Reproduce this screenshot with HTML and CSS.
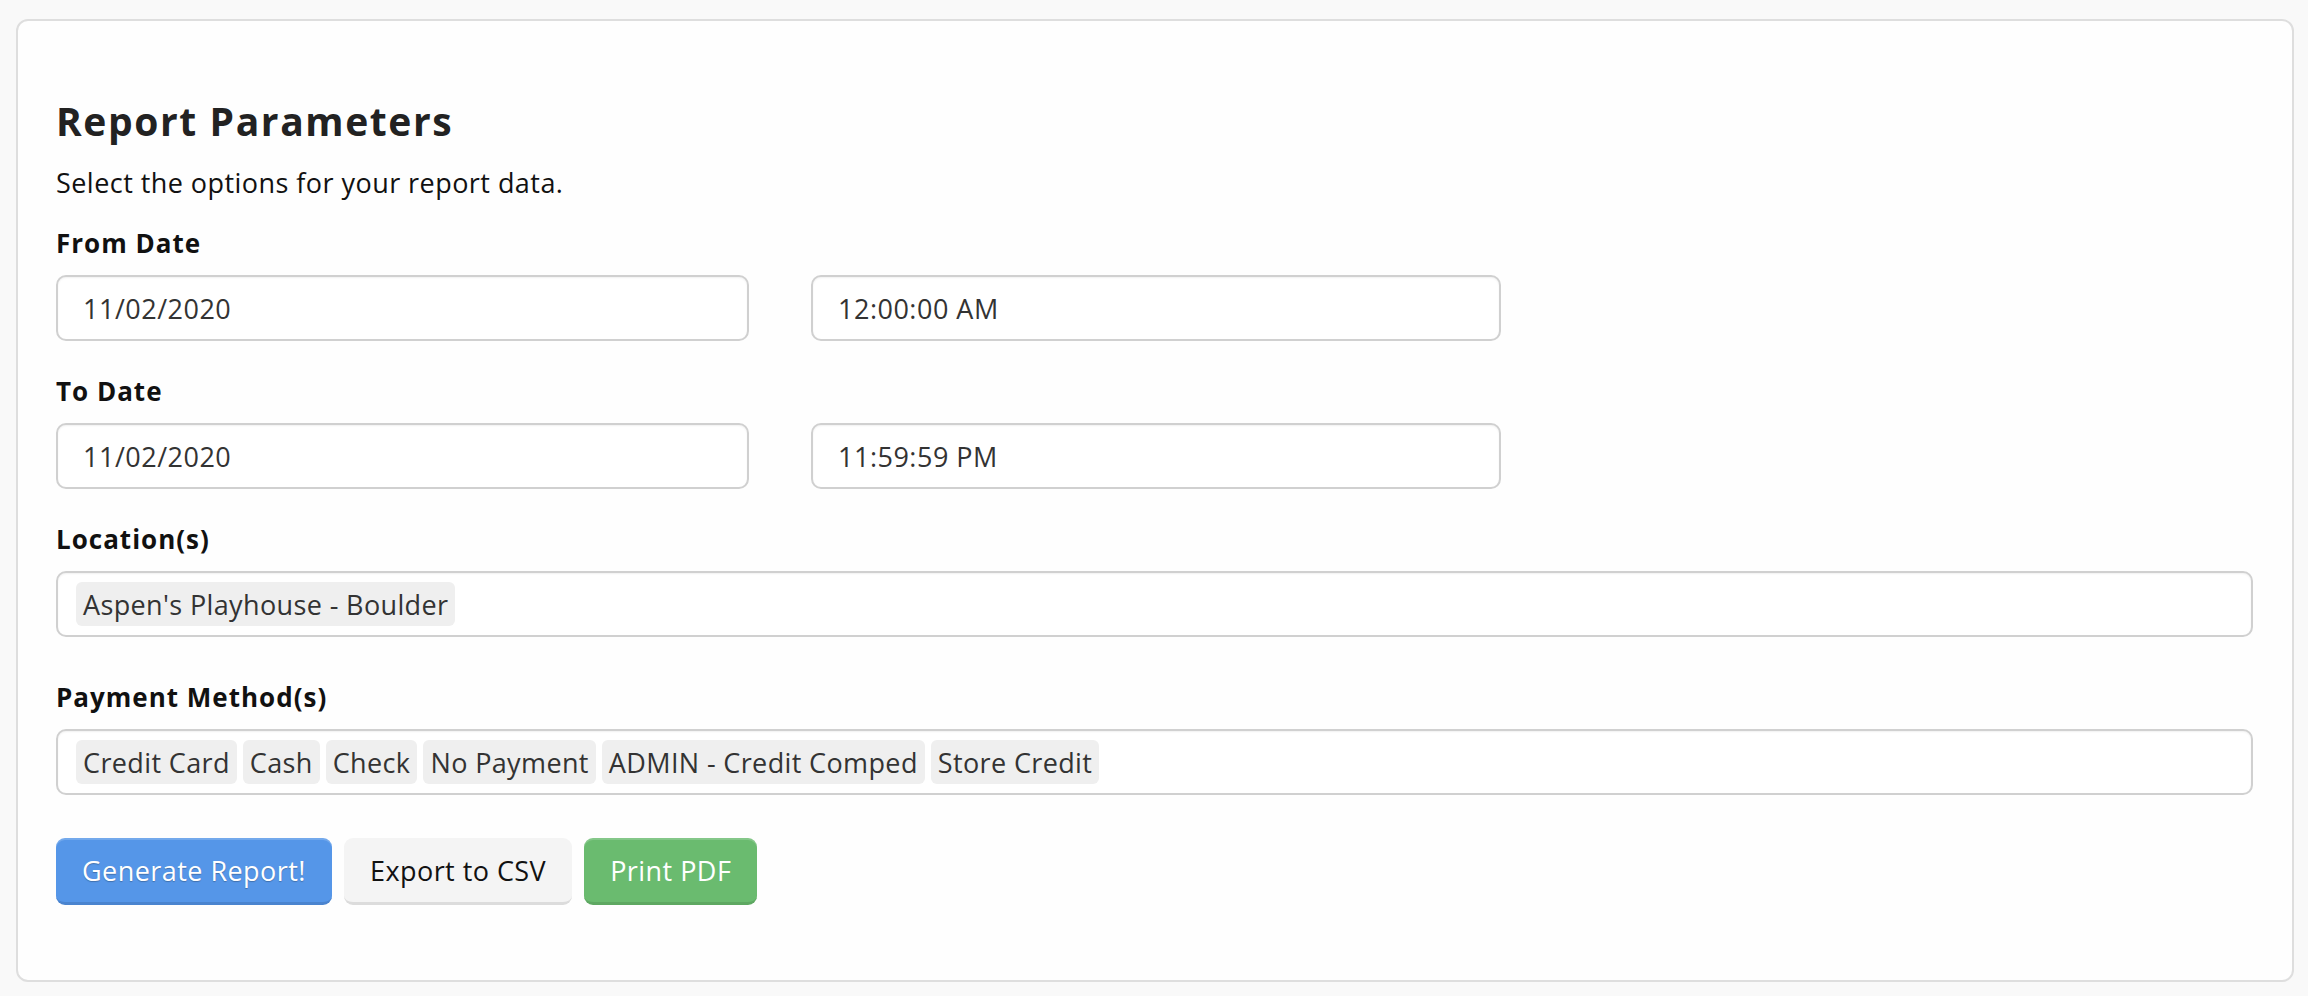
FILE: index.html
```html
<!DOCTYPE html>
<html lang="en">
<head>
<meta charset="utf-8">
<title>Report Parameters</title>
<link rel="stylesheet" href="styles.css">
</head>
<body>
<div class="card">
  <h1 class="title">Report Parameters</h1>
  <p class="subtitle">Select the options for your report data.</p>

  <div class="group">
    <div class="label">From Date</div>
    <div class="row">
      <div class="field">11/02/2020</div>
      <div class="field">12:00:00 AM</div>
    </div>
  </div>

  <div class="group">
    <div class="label">To Date</div>
    <div class="row">
      <div class="field">11/02/2020</div>
      <div class="field">11:59:59 PM</div>
    </div>
  </div>

  <div class="group group-tags">
    <div class="label">Location(s)</div>
    <div class="field field-tags">
      <span class="tag">Aspen's Playhouse - Boulder</span>
    </div>
  </div>

  <div class="group">
    <div class="label">Payment Method(s)</div>
    <div class="field field-tags">
      <span class="tag">Credit Card</span>
      <span class="tag">Cash</span>
      <span class="tag">Check</span>
      <span class="tag">No Payment</span>
      <span class="tag">ADMIN - Credit Comped</span>
      <span class="tag">Store Credit</span>
    </div>
  </div>

  <div class="actions">
    <button class="btn btn-primary">Generate Report!</button>
    <button class="btn btn-default">Export to CSV</button>
    <button class="btn btn-success">Print PDF</button>
  </div>
</div>
</body>
</html>
```
FILE: styles.css
```css
html, body {
  margin: 0;
  padding: 0;
}

body {
  background: #f9f9f9;
  font-family: "Open Sans", "Noto Sans", "Liberation Sans", sans-serif;
  color: #222;
  padding: 19px 14px 14px 16px;
}

.card {
  background: #fefefe;
  border: 2px solid #dedede;
  border-radius: 12px;
  padding: 76px 37px 75px 38px;
}

.title {
  margin: 0;
  font-size: 39px;
  line-height: 47px;
  font-weight: 700;
  letter-spacing: 1.6px;
  color: #222;
}

.subtitle {
  margin: 19px 0 0;
  font-size: 27px;
  line-height: 40px;
  letter-spacing: 0.45px;
  color: #111;
}

.group {
  margin-top: 22px;
}

.group + .group {
  margin-top: 32px;
}

.group-tags + .group {
  margin-top: 42px;
}

.label {
  font-size: 26px;
  line-height: 36px;
  font-weight: 700;
  letter-spacing: 1px;
  color: #111;
  margin-bottom: 14px;
}

.row {
  display: grid;
  grid-template-columns: 693px 690px;
  column-gap: 62px;
}

.field {
  box-sizing: border-box;
  height: 66px;
  border: 2px solid #d0d0d0;
  border-radius: 10px;
  background: #fff;
  box-shadow: inset 0 1px 2px rgba(0, 0, 0, 0.06);
  padding: 0 25px;
  display: flex;
  align-items: center;
  font-size: 27px;
  letter-spacing: 0.5px;
  color: #333;
}

.field-tags {
  padding: 0 18px;
  gap: 6px;
  margin-right: 2px;
}

.tag {
  background: #efefef;
  border-radius: 6px;
  height: 44px;
  padding: 0 7px;
  display: flex;
  align-items: center;
  font-size: 27px;
  letter-spacing: 0.37px;
  color: #333;
  white-space: nowrap;
}

.actions {
  margin-top: 43px;
  display: flex;
  gap: 12px;
}

.btn {
  font-family: inherit;
  font-size: 27px;
  letter-spacing: 0.45px;
  height: 67px;
  padding: 0 26px;
  border-radius: 9px;
  border: none;
  cursor: pointer;
}

.btn-primary {
  background: #5596e8;
  color: #fff;
  border-bottom: 3px solid #4a84cf;
  box-shadow: inset 0 2px 0 rgba(255, 255, 255, 0.18);
  text-shadow: 0 1px 1px rgba(0, 0, 0, 0.25);
}

.btn-default {
  background: #f4f4f4;
  color: #111;
  border-bottom: 3px solid #dcdcdc;
}

.btn-success {
  background: #6abb6f;
  color: #fff;
  border-bottom: 3px solid #5ea862;
  box-shadow: inset 0 2px 0 rgba(255, 255, 255, 0.18);
}
```
